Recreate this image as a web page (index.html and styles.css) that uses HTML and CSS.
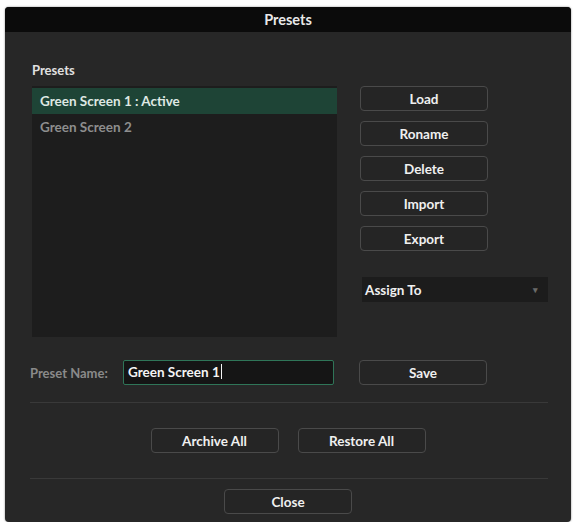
FILE: index.html
```html
<!DOCTYPE html>
<html lang="en">
<head>
  <meta charset="UTF-8">
  <title>Presets</title>
  <link rel="stylesheet" href="styles.css">
</head>
<body>
  <div class="dialog">
    <div class="titlebar">Presets</div>

    <div class="content">
      <div class="section-label">Presets</div>

      <div class="main-row">
        <div class="preset-list">
          <div class="preset-item selected">Green Screen 1 : Active</div>
          <div class="preset-item">Green Screen 2</div>
        </div>

        <div class="side">
          <button type="button" class="btn">Load</button>
          <button type="button" class="btn">Roname</button>
          <button type="button" class="btn">Delete</button>
          <button type="button" class="btn">Import</button>
          <button type="button" class="btn">Export</button>

          <div class="assign">
            <span>Assign To</span>
            <span class="arrow">&#9662;</span>
          </div>
        </div>
      </div>

      <div class="name-row">
        <label for="preset-name">Preset Name:</label>
        <div class="name-input">Green Screen 1<span class="caret"></span></div>
        <button type="button" class="btn">Save</button>
      </div>

      <div class="separator"></div>

      <div class="center-row archive-row">
        <button type="button" class="btn">Archive All</button>
        <button type="button" class="btn">Restore All</button>
      </div>

      <div class="separator"></div>

      <div class="center-row close-row">
        <button type="button" class="btn">Close</button>
      </div>
    </div>
  </div>
</body>
</html>
```

FILE: styles.css
```css
body {
  margin: 0;
  background-color: #ffffff;
  font-family: Lato, "Open Sans", sans-serif;
}

.dialog {
  width: 566px;
  height: 515px;
  margin: 7px 0 0 5px;
  background-color: #272727;
  border-radius: 4px;
  overflow: hidden;
  box-shadow: 0 0 2px rgba(0, 0, 0, 0.5);
}

.titlebar {
  height: 25px;
  line-height: 25px;
  background-color: #0b0b0b;
  color: #e8e8e8;
  font-size: 14.5px;
  font-weight: bold;
  text-align: center;
}

.content {
  padding: 30px 23px 0 25px;
}

.section-label {
  padding-left: 2px;
  height: 16px;
  line-height: 16px;
  color: #e0e0e0;
  font-size: 13px;
  font-weight: bold;
  margin-bottom: 8px;
}

.main-row {
  display: flex;
  gap: 23px;
  padding-left: 2px;
}

.preset-list {
  width: 305px;
  height: 249px;
  padding-top: 2px;
  background-color: #1d1d1d;
}

.preset-item {
  height: 26px;
  line-height: 26px;
  padding-left: 8px;
  font-size: 13.5px;
  font-weight: bold;
  color: #8e8e8e;
}

.preset-item.selected {
  background-color: #1e4436;
  color: #dfe8e3;
}

.side {
  display: flex;
  flex-direction: column;
  gap: 10px;
}

.btn {
  width: 128px;
  height: 25px;
  padding: 0;
  background-color: #252525;
  border: 1px solid #4a4a4a;
  border-radius: 4px;
  color: #f0f0f0;
  font-family: Lato, "Open Sans", sans-serif;
  font-size: 13.5px;
  font-weight: bold;
}

.assign {
  width: 186px;
  height: 25px;
  margin-top: 16px;
  margin-left: 2px;
  padding: 0 10px 0 3px;
  box-sizing: border-box;
  display: flex;
  align-items: center;
  justify-content: space-between;
  background-color: #1c1c1c;
  color: #f0f0f0;
  font-size: 13.5px;
  font-weight: bold;
}

.assign .arrow {
  color: #6a6a6a;
  font-size: 9px;
}

.name-row {
  display: flex;
  align-items: center;
  margin-top: 23px;
}

.name-row label {
  width: 93px;
  color: #8a8a8a;
  font-size: 13px;
  font-weight: bold;
}

.name-input {
  width: 211px;
  height: 25px;
  box-sizing: border-box;
  line-height: 23px;
  padding-left: 4px;
  margin-right: 25px;
  background-color: #151515;
  border: 1px solid #2f7558;
  border-radius: 2px;
  color: #f4f4f4;
  font-size: 13.5px;
  font-weight: bold;
}

.caret {
  display: inline-block;
  width: 1px;
  height: 15px;
  margin-left: 1px;
  vertical-align: -2px;
  background-color: #f4f4f4;
}

.separator {
  height: 1px;
  background-color: #393939;
}

.name-row + .separator {
  margin-top: 17px;
}

.center-row {
  display: flex;
  justify-content: center;
  gap: 19px;
  margin-left: -25px;
  margin-right: -23px;
}

.archive-row {
  margin-top: 25px;
  margin-bottom: 25px;
}

.close-row {
  margin-top: 10px;
}
```
